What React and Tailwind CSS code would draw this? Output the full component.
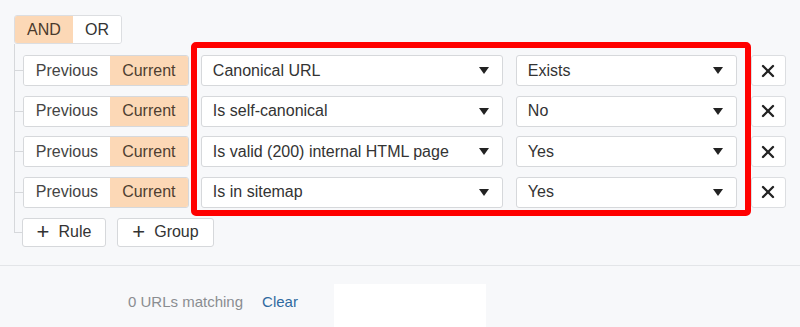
import { X } from 'lucide-react'

const rows = [
  { field: 'Canonical URL', value: 'Exists' },
  { field: 'Is self-canonical', value: 'No' },
  { field: 'Is valid (200) internal HTML page', value: 'Yes' },
  { field: 'Is in sitemap', value: 'Yes' },
]

function Caret() {
  return (
    <svg width="10" height="7" viewBox="0 0 10 7" aria-hidden="true">
      <path d="M0 0h10L5 7z" fill="#222" />
    </svg>
  )
}

function Select({ label, width }) {
  return (
    <div
      className={`flex h-[31px] items-center justify-between rounded-[3px] border border-[#d6d8db] bg-white pl-[11px] pr-[13px] text-[16px] text-[#333] ${width}`}
    >
      <span>{label}</span>
      <Caret />
    </div>
  )
}

function Tick() {
  return <div className="h-px w-2 shrink-0 bg-[#d6d8db]" />
}

export default function App() {
  return (
    <div
      className="h-[327px] w-[800px] overflow-hidden bg-[#f7f8fa] text-[16px] text-[#333]"
      style={{ fontFamily: '"Liberation Sans", Arial, sans-serif' }}
    >
      <div className="relative px-[14px] pt-[15px]">
        <div className="flex h-[29px] w-[108px] overflow-hidden rounded-[3px] border border-[#dcdee1]">
          <div className="flex w-[58px] items-center justify-center bg-[#fcd8b6] text-[#4a3a2c]">AND</div>
          <div className="flex flex-1 items-center justify-center bg-white text-[#333]">OR</div>
        </div>

        <div className="flex flex-col gap-[9.5px] border-l border-[#d6d8db] pb-[10px] pt-[11px]">
          {rows.map((r) => (
            <div key={r.field} className="flex items-center">
              <Tick />
              <div className="flex h-[31px] overflow-hidden rounded-[3px] border border-[#d6d8db]">
                <div className="flex w-[88px] items-center justify-center bg-white text-[#444]">Previous</div>
                <div className="flex w-[80px] items-center justify-center bg-[#fcd8b6] text-[#4e3e30]">Current</div>
              </div>
              <div className="ml-[12px]">
                <Select label={r.field} width="w-[302px]" />
              </div>
              <div className="ml-[13px]">
                <Select label={r.value} width="w-[221px]" />
              </div>
              <div className="ml-[14px] flex h-[31px] w-[36px] items-center justify-center rounded-[3px] border border-[#dcdee1] bg-white">
                <X size={20} strokeWidth={2.8} color="#222" />
              </div>
            </div>
          ))}
        </div>
        <div className="flex items-start">
          <div className="h-[15px] w-2 shrink-0 border-b border-l border-[#d6d8db]" />
          <div className="flex h-[29px] w-[84px] items-center justify-center gap-[9px] rounded-[3px] border border-[#d6d8db] bg-white text-[#333]">
            <span className="text-[22px] leading-none">+</span>
            <span>Rule</span>
          </div>
          <div className="ml-[11px] flex h-[29px] w-[97px] items-center justify-center gap-[9px] rounded-[3px] border border-[#d6d8db] bg-white text-[#333]">
            <span className="text-[22px] leading-none">+</span>
            <span>Group</span>
          </div>
        </div>

        <div className="pointer-events-none absolute left-[191px] top-[42px] h-[174px] w-[560px] rounded-[5px] border-[6px] border-[#ff0000]" />
      </div>

      <div className="mt-[18px] border-t border-[#e3e5e8]">
        <div className="flex items-start pl-[128px] pt-[18px]">
          <span className="mt-[7px] text-[15px] text-[#8a8d91]">0 URLs matching</span>
          <span className="ml-[19px] mt-[7px] text-[15px] text-[#2f6aa0]">Clear</span>
          <div className="ml-[36px] h-[43px] w-[152px] bg-white" />
        </div>
      </div>
    </div>
  )
}
